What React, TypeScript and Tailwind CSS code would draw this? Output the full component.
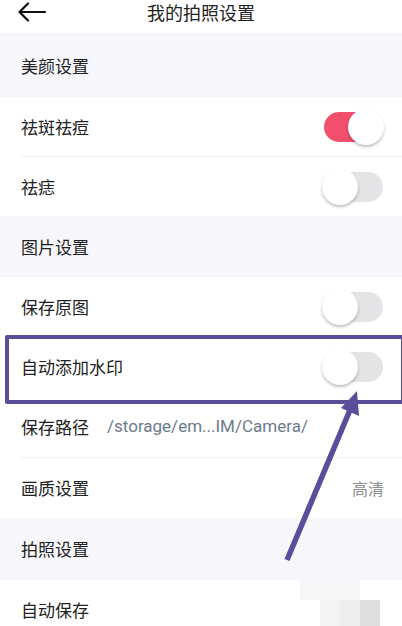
import React from 'react'

const font = { fontFamily: '"Noto Sans CJK SC", "Noto Sans", sans-serif' }

function Toggle({ on }: { on?: boolean }) {
    return (
        <div className="relative w-[62px] h-[36px] shrink-0">
            <div
                className={
                    on
                        ? 'absolute left-[2px] right-[2px] top-[3px] bottom-[3px] rounded-full bg-[#f24f6d]'
                        : 'absolute left-[12px] right-[1px] top-[3px] bottom-[3px] rounded-full bg-[#e4e4e7]'
                }
            />
            <div
                className={
                    on
                        ? 'absolute right-0 top-0 w-[36px] h-[36px] rounded-full bg-white shadow-[0_2px_3px_rgba(0,0,0,0.25)]'
                        : 'absolute left-0 top-0 w-[36px] h-[36px] rounded-full bg-white shadow-[0_2px_3px_rgba(0,0,0,0.25)]'
                }
            />
        </div>
    )
}

function Section({ title, h = 'h-[62px]' }: { title: string; h?: string }) {
    return (
        <div className={`${h} bg-[#f7f7fb] flex items-center px-[21px] text-[17px] text-[#222]`}>
            {title}
        </div>
    )
}

function Row({ label, children, divider = true, h = 'h-[60px]' }: { label: string; children?: React.ReactNode; divider?: boolean; h?: string }) {
    return (
        <div className={`${h} bg-white pl-[21px]`}>
            <div className={`h-full flex items-center pr-[18px] ${divider ? 'border-b border-[#efefef]' : ''}`}>
                <span className="text-[17px] text-[#222] shrink-0">{label}</span>
                <div className="flex-1 flex justify-end items-center">{children}</div>
            </div>
        </div>
    )
}

export default function App() {
    return (
        <div className="relative w-[402px] h-[626px] overflow-hidden bg-white" style={font}>
            <div className="h-[35px] relative border-b border-[#efefef]">
                <svg className="absolute left-[17px] top-[1px]" width="30" height="22" viewBox="0 0 30 22" fill="none" stroke="#111" strokeWidth="2.2" strokeLinecap="round" strokeLinejoin="round">
                    <path d="M28 11H3M11 2.5L2.5 11L11 19.5" />
                </svg>
                <div className="text-center text-[18px] leading-[24px] text-[#222]">我的拍照设置</div>
            </div>

            <Section title="美颜设置" />
            <Row label="祛斑祛痘"><Toggle on /></Row>
            <Row label="祛痣" divider={false} h="h-[59px]"><Toggle /></Row>
            <Section title="图片设置" h="h-[61px]" />
            <Row label="保存原图"><Toggle /></Row>
            <Row label="自动添加水印" divider={false}><Toggle /></Row>
            <Row label="保存路径" h="h-[61px]">
                <span className="flex-1 ml-[18px] text-[17px] text-[#6c7b8b]" style={{ fontFamily: 'Roboto, "Noto Sans", sans-serif' }}>
                    /storage/em...IM/Camera/
                </span>
            </Row>
            <Row label="画质设置" divider={false}>
                <span className="text-[16px] text-[#8e8e8e]">高清</span>
            </Row>
            <Section title="拍照设置" />
            <Row label="自动保存" divider={false} />

            {/* annotation box */}
            <div className="absolute left-[5px] top-[335px] w-[400px] h-[69px] border-[4px] border-[#5a4e9b] rounded-[2px]" />

            {/* faint watermark blocks */}
            <div className="absolute left-[300px] top-[580px] w-[60px] h-[20px] bg-[#f6f6f6]" />
            <div className="absolute left-[340px] top-[600px] w-[20px] h-[26px] bg-[#eeeeee]" />
            <div className="absolute left-[360px] top-[600px] w-[20px] h-[26px] bg-[#dedede]" />
            <div className="absolute left-[320px] top-[600px] w-[20px] h-[26px] bg-[#f3f3f3]" />

            {/* arrow */}
            <svg className="absolute left-0 top-0 pointer-events-none" width="402" height="626" viewBox="0 0 402 626">
                <line x1="287" y1="560" x2="350" y2="410" stroke="#5a4e9b" strokeWidth="5.5" />
                <polygon points="357,391 359,416 341,408" fill="#5a4e9b" />
            </svg>
        </div>
    )
}
